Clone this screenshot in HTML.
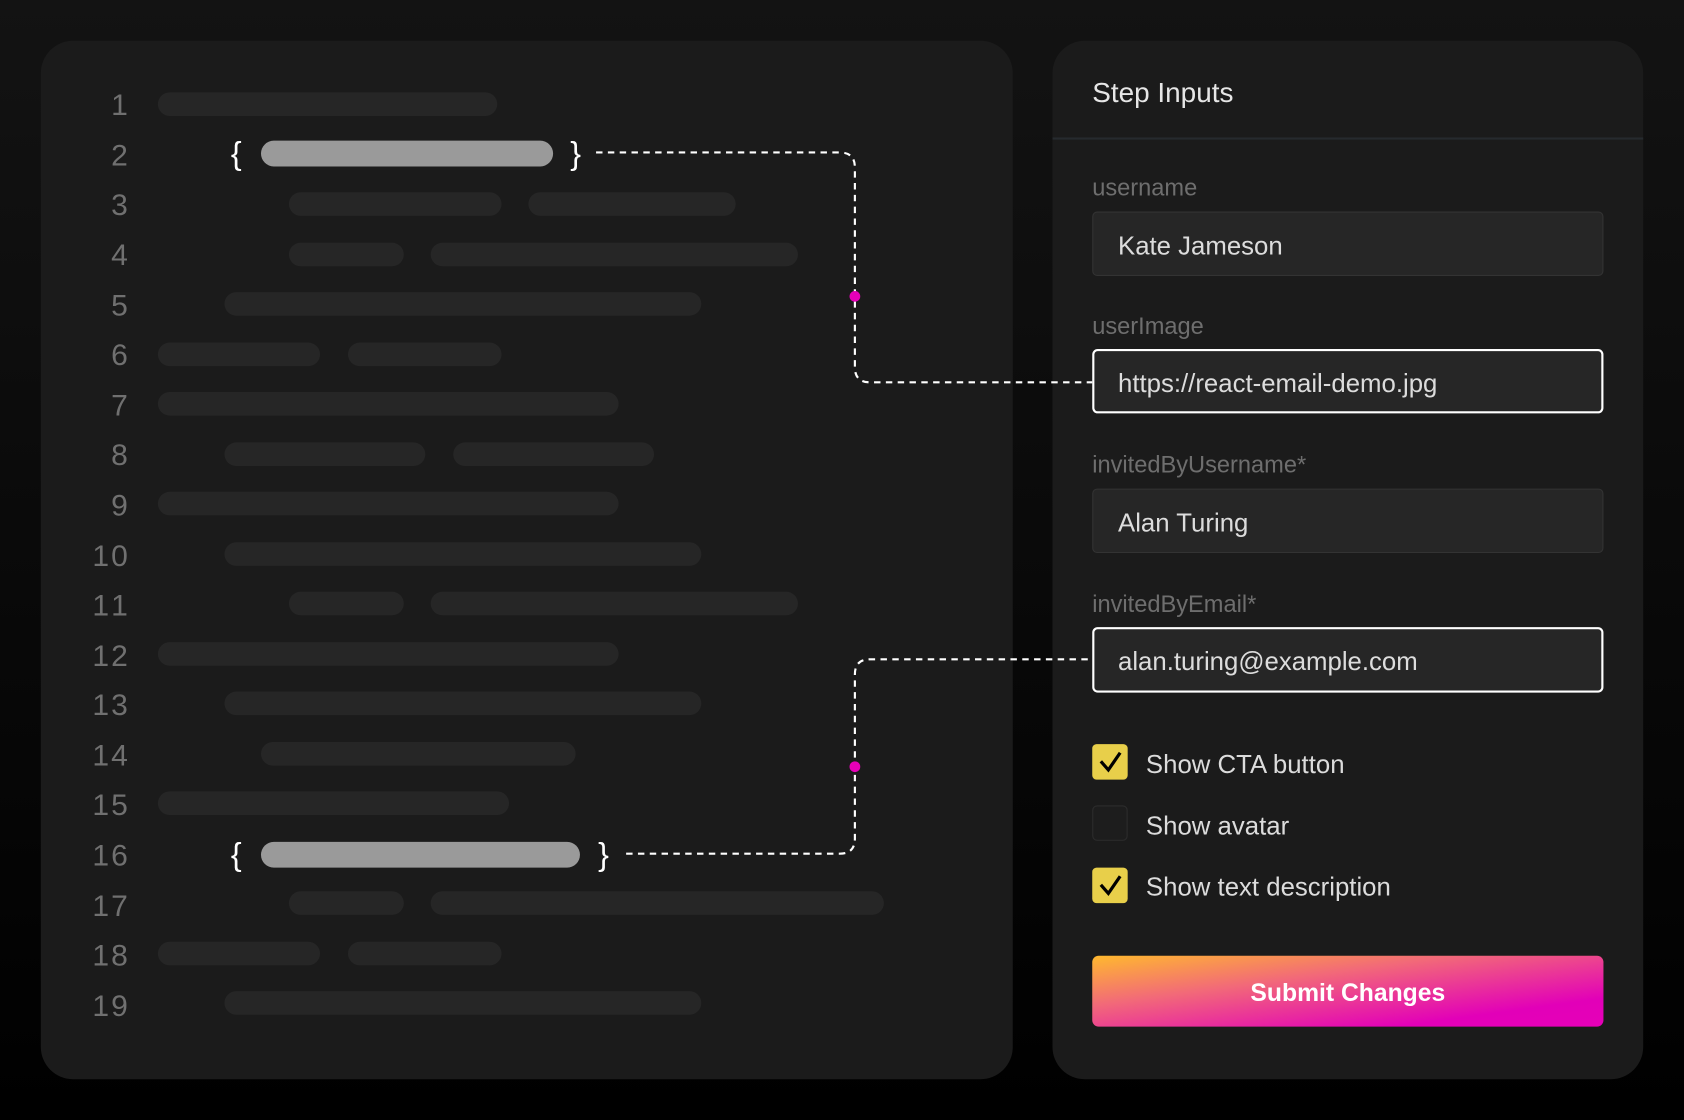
<!DOCTYPE html>
<html><head><meta charset="utf-8"><style>
html,body{margin:0;padding:0;background:#0a0a0a;overflow:hidden}
svg{display:block}
</style></head><body>
<svg width="1684" height="1120" viewBox="0 0 1568 1043" preserveAspectRatio="none" xmlns="http://www.w3.org/2000/svg">
<defs>
<linearGradient id="bg" x1="0" y1="0" x2="0" y2="1"><stop offset="0" stop-color="#131313"/><stop offset="1" stop-color="#000"/></linearGradient>
<linearGradient id="btn" x1="0" y1="0" x2="1" y2="1" gradientUnits="objectBoundingBox"><stop offset="0" stop-color="#ffb92e"/><stop offset="0.35" stop-color="#f26a78"/><stop offset="0.8" stop-color="#e200b8"/><stop offset="1" stop-color="#e600b8"/></linearGradient>
</defs>
<rect width="1568" height="1043" fill="url(#bg)"/>
<rect x="38" y="38" width="905" height="967" rx="30" fill="#1b1b1b"/>
<rect x="980" y="38" width="550" height="967" rx="30" fill="#1b1b1b"/>
<g font-family="Liberation Sans, sans-serif" font-size="28" fill="#707070" text-anchor="end">
<text x="119" y="107">1</text><text x="119" y="154">2</text><text x="119" y="200">3</text><text x="119" y="247">4</text><text x="119" y="294">5</text><text x="119" y="340">6</text><text x="119" y="387">7</text><text x="119" y="433">8</text><text x="119" y="480">9</text><text x="119" y="527" textLength="33">10</text><text x="119" y="573" textLength="33">11</text><text x="119" y="620" textLength="33">12</text><text x="119" y="666" textLength="33">13</text><text x="119" y="713" textLength="33">14</text><text x="119" y="759" textLength="33">15</text><text x="119" y="806" textLength="33">16</text><text x="119" y="853" textLength="33">17</text><text x="119" y="899" textLength="33">18</text><text x="119" y="946" textLength="33">19</text>
</g>
<g fill="#262626">
<rect x="147" y="86" width="316" height="22" rx="11"/>
<rect x="269" y="179" width="198" height="22" rx="11"/><rect x="492" y="179" width="193" height="22" rx="11"/>
<rect x="269" y="226" width="107" height="22" rx="11"/><rect x="401" y="226" width="342" height="22" rx="11"/>
<rect x="209" y="272" width="444" height="22" rx="11"/>
<rect x="147" y="319" width="151" height="22" rx="11"/><rect x="324" y="319" width="143" height="22" rx="11"/>
<rect x="147" y="365" width="429" height="22" rx="11"/>
<rect x="209" y="412" width="187" height="22" rx="11"/><rect x="422" y="412" width="187" height="22" rx="11"/>
<rect x="147" y="458" width="429" height="22" rx="11"/>
<rect x="209" y="505" width="444" height="22" rx="11"/>
<rect x="269" y="551" width="107" height="22" rx="11"/><rect x="401" y="551" width="342" height="22" rx="11"/>
<rect x="147" y="598" width="429" height="22" rx="11"/>
<rect x="209" y="644" width="444" height="22" rx="11"/>
<rect x="243" y="691" width="293" height="22" rx="11"/>
<rect x="147" y="737" width="327" height="22" rx="11"/>
<rect x="269" y="830" width="107" height="22" rx="11"/><rect x="401" y="830" width="422" height="22" rx="11"/>
<rect x="147" y="877" width="151" height="22" rx="11"/><rect x="324" y="877" width="143" height="22" rx="11"/>
<rect x="209" y="923" width="444" height="22" rx="11"/>
</g>
<rect x="243" y="131" width="272" height="24" rx="12" fill="#9a9a9a"/>
<rect x="243" y="784" width="297" height="24" rx="12" fill="#9a9a9a"/>
<g font-family="Liberation Sans, sans-serif" font-size="30" fill="#fff" text-anchor="middle">
<text x="220" y="153">{</text><text x="536" y="153">}</text>
<text x="220" y="806">{</text><text x="562" y="806">}</text>
</g>
<g fill="none" stroke="#fff" stroke-width="2" stroke-dasharray="6 5">
<path d="M555 142 H782 Q796 142 796 156 V342 Q796 356 810 356 H1017"/>
<path d="M583 795 H782 Q796 795 796 781 V628 Q796 614 810 614 H1017"/>
</g>
<circle cx="796" cy="276" r="5" fill="#e600b8"/>
<circle cx="796" cy="714" r="5" fill="#e600b8"/>
<text x="1017" y="95" font-family="Liberation Sans, sans-serif" font-size="26" fill="#e6e6e6">Step Inputs</text>
<rect x="980" y="128" width="550" height="2" fill="#262a2e"/>
<g font-family="Liberation Sans, sans-serif" font-size="22" fill="#6e6e6e">
<text x="1017" y="182">username</text>
<text x="1017" y="311">userImage</text>
<text x="1017" y="440">invitedByUsername*</text>
<text x="1017" y="570">invitedByEmail*</text>
</g>
<rect x="1017.5" y="197.5" width="475" height="59" rx="4" fill="#262626" stroke="#333"/>
<rect x="1018" y="326" width="474" height="58" rx="4" fill="#262626" stroke="#fff" stroke-width="2"/>
<rect x="1017.5" y="455.5" width="475" height="59" rx="4" fill="#262626" stroke="#333"/>
<rect x="1018" y="585" width="474" height="59" rx="4" fill="#262626" stroke="#fff" stroke-width="2"/>
<g font-family="Liberation Sans, sans-serif" font-size="24" fill="#dcdcdc">
<text x="1041" y="237">Kate Jameson</text>
<text x="1041" y="365">https://react-email-demo.jpg</text>
<text x="1041" y="495">Alan Turing</text>
<text x="1041" y="624">alan.turing@example.com</text>
<text x="1067" y="720">Show CTA button</text>
<text x="1067" y="777">Show avatar</text>
<text x="1067" y="834">Show text description</text>
</g>
<rect x="1017" y="693" width="33" height="33" rx="4" fill="#e8cf4a"/>
<path d="M1025 709 L1032 717 L1043 701" fill="none" stroke="#000" stroke-width="3"/>
<rect x="1017.5" y="750.5" width="32" height="32" rx="4" fill="#1d1d1d" stroke="#2c2c2c"/>
<rect x="1017" y="808" width="33" height="33" rx="4" fill="#e8cf4a"/>
<path d="M1025 824 L1032 832 L1043 816" fill="none" stroke="#000" stroke-width="3"/>
<rect x="1017" y="890" width="476" height="66" rx="6" fill="url(#btn)"/>
<text x="1255" y="932" text-anchor="middle" font-family="Liberation Sans, sans-serif" font-size="23" font-weight="bold" fill="#fff">Submit Changes</text>
</svg>
</body></html>
